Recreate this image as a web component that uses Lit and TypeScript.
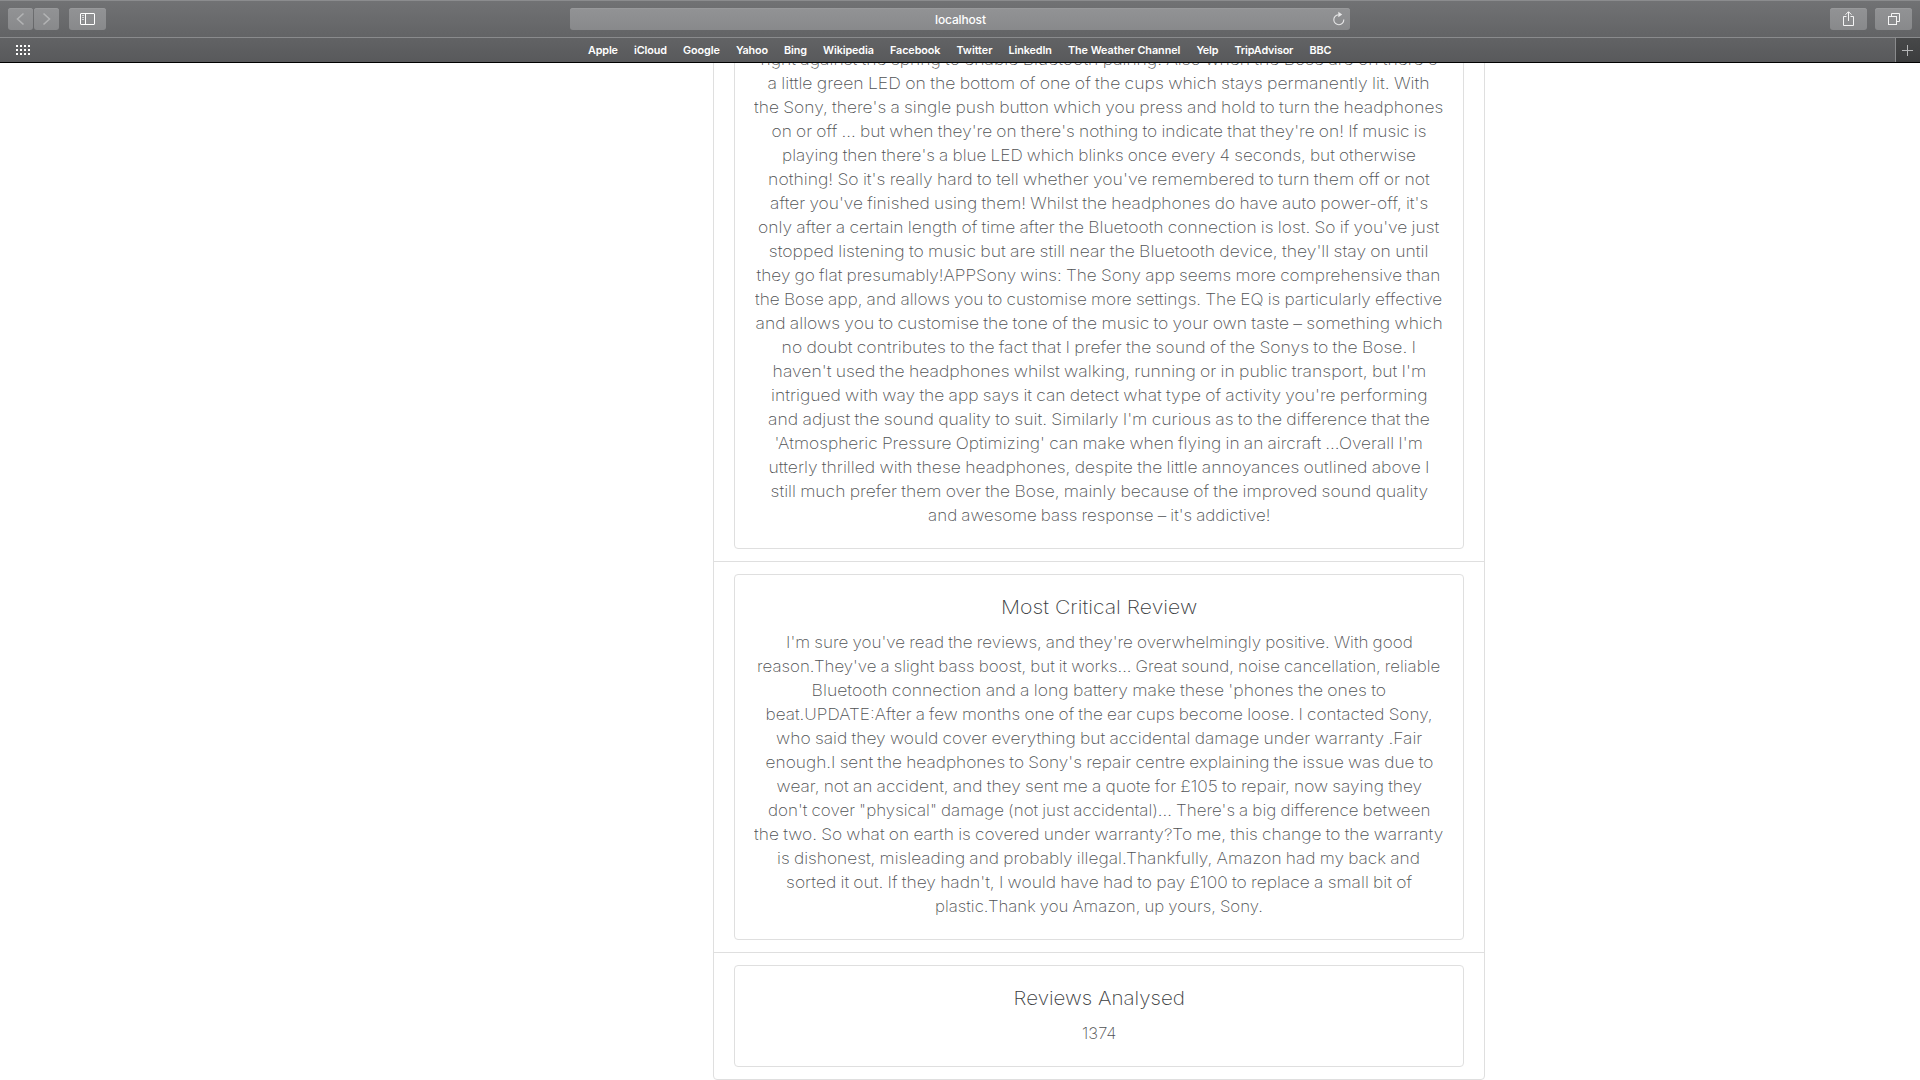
import { LitElement, html, css, svg, nothing } from "lit";
import { customElement, property } from "lit/decorators.js";

type Line = [text: string, width: number];

const BOOKMARKS: Line[] = [
  ["Apple", 30], ["iCloud", 33], ["Google", 37], ["Yahoo", 32], ["Bing", 23],
  ["Wikipedia", 51], ["Facebook", 50.5], ["Twitter", 36], ["LinkedIn", 43.5],
  ["The Weather Channel", 112.5], ["Yelp", 22], ["TripAdvisor", 59], ["BBC", 22],
];

const POSITIVE: Line[] = [
  ["right against the spring to enable Bluetooth pairing. Also when the Bose are on there's", 676],
  ["a little green LED on the bottom of one of the cups which stays permanently lit. With", 661],
  ["the Sony, there's a single push button which you press and hold to turn the headphones", 688],
  ["on or off ... but when they're on there's nothing to indicate that they're on! If music is", 654],
  ["playing then there's a blue LED which blinks once every 4 seconds, but otherwise", 633],
  ["nothing! So it's really hard to tell whether you've remembered to turn them off or not", 661],
  ["after you've finished using them! Whilst the headphones do have auto power-off, it's", 657],
  ["only after a certain length of time after the Bluetooth connection is lost. So if you've just", 680],
  ["stopped listening to music but are still near the Bluetooth device, they'll stay on until", 658.5],
  ["they go flat presumably!APPSony wins: The Sony app seems more comprehensive than", 683],
  ["the Bose app, and allows you to customise more settings. The EQ is particularly effective", 686],
  ["and allows you to customise the tone of the music to your own taste – something which", 686],
  ["no doubt contributes to the fact that I prefer the sound of the Sonys to the Bose. I", 634],
  ["haven't used the headphones whilst walking, running or in public transport, but I'm", 653],
  ["intrigued with way the app says it can detect what type of activity you're performing", 656],
  ["and adjust the sound quality to suit. Similarly I'm curious as to the difference that the", 661],
  ["'Atmospheric Pressure Optimizing' can make when flying in an aircraft ...Overall I'm", 647],
  ["utterly thrilled with these headphones, despite the little annoyances outlined above I", 660],
  ["still much prefer them over the Bose, mainly because of the improved sound quality", 657],
  ["and awesome bass response – it's addictive!", 341],
];

const CRITICAL: Line[] = [
  ["I'm sure you've read the reviews, and they're overwhelmingly positive. With good", 626],
  ["reason.They've a slight bass boost, but it works... Great sound, noise cancellation, reliable", 682],
  ["Bluetooth connection and a long battery make these 'phones the ones to", 574],
  ["beat.UPDATE:After a few months one of the ear cups become loose. I contacted Sony,", 666],
  ["who said they would cover everything but accidental damage under warranty .Fair", 645],
  ["enough.I sent the headphones to Sony's repair centre explaining the issue was due to", 667],
  ["wear, not an accident, and they sent me a quote for £105 to repair, now saying they", 645],
  ["don't cover \"physical\" damage (not just accidental)... There's a big difference between", 661],
  ["the two. So what on earth is covered under warranty?To me, this change to the warranty", 688],
  ["is dishonest, misleading and probably illegal.Thankfully, Amazon had my back and", 642],
  ["sorted it out. If they hadn't, I would have had to pay £100 to replace a small bit of", 625],
  ["plastic.Thank you Amazon, up yours, Sony.", 327],
];

/** One line of text that fills a given width, by tracking or by widening its letters. */
@customElement("fit-line")
class FitLine extends LitElement {
  @property() text = "";
  @property({ type: Number }) width = 0;
  @property({ type: Boolean }) stretch = false;

  static styles = css`
    :host { display: block; white-space: nowrap; }
    .run { display: inline-block; }
  `;

  updated() {
    const run = this.renderRoot.querySelector<HTMLElement>(".run")!;
    if (this.stretch) {
      run.style.transform = `scaleX(${(this.width + 0.8) / run.offsetWidth})`;
      return;
    }
    run.style.letterSpacing = "0px";
    const natural = run.getBoundingClientRect().width;
    const step = (this.width - natural) / (this.text.length - 1);
    run.style.letterSpacing = `${step}px`;
    run.style.marginRight = `${-step}px`;
  }

  render() {
    return html`<span class="run">${this.text}</span>`;
  }
}

@customElement("browser-bar")
class BrowserBar extends LitElement {
  static styles = css`
    :host {
      display: flex; flex-direction: column; flex: none; box-sizing: border-box; height: 63px;
      background: linear-gradient(#717274, #58595b);
      border-top: 1px solid #8b8c8e; border-bottom: 1px solid #000;
      color: #fff; font-family: Inter, "Liberation Sans", sans-serif;
    }
    .tools {
      display: grid; grid-template-columns: 570px 780px 1fr; flex: none; height: 37px;
      box-sizing: border-box; padding-top: 7px; border-bottom: 1px solid #8a8b8d;
    }
    .left { display: flex; padding-left: 8px; gap: 1px; }
    .right { display: flex; justify-content: flex-end; padding-right: 8px; gap: 8px; }
    .button {
      width: 37px; height: 22px; border-radius: 3px; background: linear-gradient(#929395, #88898b);
      box-shadow: inset 0 1px #98999b;
    }
    .button.small { width: 25px; }
    .button.side { margin-left: 9px; }
    .address {
      display: grid; grid-template-columns: 1fr auto 1fr; align-items: center; height: 22px;
      border-radius: 3px; background: linear-gradient(#929395, #88898b);
      box-shadow: inset 0 1px #98999b; font-size: 12px; font-weight: 500; line-height: 22px;
    }
    .host { padding: 1px 0 0 1px; line-height: 21px; }
    .reload { justify-self: end; margin-right: 4px; }
    .marks { display: flex; height: 24px; }
    .grid { flex: none; margin-left: 16px; margin-top: 7px; }
    .links {
      display: flex; flex: 1; gap: 16px; padding-left: 557px; font-size: 10.8px; font-weight: 600;
      line-height: 25px;
    }
    .plus { width: 24px; border-left: 1px solid #8a8b8d; background: linear-gradient(#474849, #3c3d3e); }
    svg { display: block; fill: none; }
  `;

  render() {
    return html`
      <div class="tools">
        <div class="left">
          <div class="button small"><svg width="25" height="22" stroke="#b2b3b4" stroke-width="1.6"><path d="M15.5 5.5 9.5 11l6 5.5" /></svg></div>
          <div class="button small"><svg width="25" height="22" stroke="#b2b3b4" stroke-width="1.6"><path d="M9.5 5.5 15.5 11l-6 5.5" /></svg></div>
          <div class="button side">
            <svg width="37" height="22" stroke="#fff"><rect x="11.5" y="5.5" width="14" height="11" rx=".5" /><path d="M16.5 5.5v11" /><path d="M13 7.5h2M13 9.5h2M13 11.5h2" stroke="#d5d6d7" /></svg>
          </div>
        </div>
        <div class="address">
          <span></span>
          <fit-line class="host" text="localhost" width="51"></fit-line>
          <svg class="reload" width="14" height="16" stroke="#e6e6e7" stroke-width="1.1"><path d="M6.5 3.7A5 5 0 1 0 11.8 8.5" /><path d="M6.3.8 10.2 3.6 6.3 6.2Z" fill="#e6e6e7" stroke="none" /></svg>
        </div>
        <div class="right">
          <div class="button">
            <svg width="37" height="22" stroke="#f4f4f4"><path d="M16.5 8.5h-3v9h10v-9h-3M18.5 13V4M15.5 6.7l3-3 3 3" /></svg>
          </div>
          <div class="button">
            <svg width="37" height="22" stroke="#f4f4f4"><rect x="13.5" y="8.5" width="8" height="8" /><path d="M16.5 8.5v-3h8v8h-3" /></svg>
          </div>
        </div>
      </div>
      <div class="marks">
        <svg class="grid" width="15" height="11">
          ${[0, 4, 8].map((y) => [0, 4, 8, 12].map((x) => svg`<rect x=${x} y=${y} width="2" height="2" fill="#fff" />`))}
        </svg>
        <div class="links">${BOOKMARKS.map(([t, w]) => html`<fit-line .text=${t} .width=${w}></fit-line>`)}</div>
        <div class="plus"><svg width="24" height="24" stroke="#b4b5b6"><path d="M6 12.5h11M11.5 7v11" /></svg></div>
      </div>
    `;
  }
}

@customElement("review-card")
class ReviewCard extends LitElement {
  @property() heading = "";
  @property({ type: Number }) headingWidth = 0;
  @property({ attribute: false }) lines: Line[] = [];

  static styles = css`
    :host { display: block; padding: 12px 20px; border-top: 1px solid #dfdfdf; }
    .card {
      padding: 20px; border: 1px solid #dfdfdf; border-radius: 4px; text-align: center;
      font-family: Inter, "Open Sans", sans-serif; font-weight: 200; color: #505254;
    }
    .title { margin-bottom: 12px; font-size: 19.3px; line-height: 24px; color: #3a3c3e; }
    .line { font-size: 15.6px; line-height: 24px; word-spacing: -0.6px; }
  `;

  render() {
    return html`
      <div class="card">
        ${this.heading
          ? html`<fit-line class="title" stretch .text=${this.heading} .width=${this.headingWidth}></fit-line>`
          : nothing}
        ${this.lines.map(([t, w]) => html`<fit-line class="line" stretch .text=${t} .width=${w}></fit-line>`)}
      </div>
    `;
  }
}

@customElement("app-root")
class AppRoot extends LitElement {
  static styles = css`
    :host { display: flex; flex-direction: column; height: 1080px; overflow: hidden; background: #fff; }
    .page {
      display: flex; flex: 1; min-height: 0; flex-direction: column; justify-content: flex-end;
      overflow: hidden; padding-left: 713px;
    }
    .list { width: 770px; border: 1px solid #dfdfdf; border-radius: 4px; }
  `;

  render() {
    return html`
      <browser-bar></browser-bar>
      <div class="page">
        <div class="list">
          <review-card .lines=${POSITIVE}></review-card>
          <review-card .heading=${"Most Critical Review"} .headingWidth=${195} .lines=${CRITICAL}></review-card>
          <review-card .heading=${"Reviews Analysed"} .headingWidth=${171} .lines=${[["1374", 33]] as Line[]}></review-card>
        </div>
      </div>
    `;
  }
}
